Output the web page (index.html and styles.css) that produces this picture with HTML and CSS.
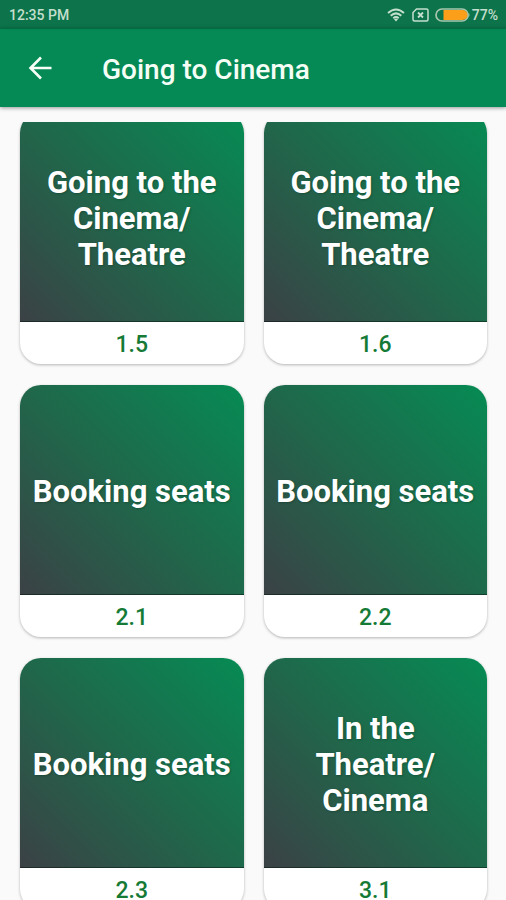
FILE: index.html
```html
<!DOCTYPE html>
<html lang="en">
<head>
<meta charset="utf-8">
<meta name="viewport" content="width=device-width, initial-scale=1">
<title>Going to Cinema</title>
<link rel="stylesheet" href="styles.css">
</head>
<body>
<div class="status">
  <span class="clock">12:35 PM</span>
  <svg class="wifi" width="18" height="14" viewBox="0 0 18 14" fill="none" stroke="currentColor" stroke-width="2" aria-hidden="true">
    <path d="M1 5Q9-2 17 5M3.700 7.700Q9 3 14.300 7.700M6.300 10.200Q9 7.800 11.700 10.200"/>
    <path d="M9 13.500L7 11.300Q9 9.800 11 11.300Z" fill="currentColor" stroke="none"/>
  </svg>
  <svg class="sim" width="17" height="14" viewBox="0 0 17 14" fill="none" stroke="currentColor" stroke-width="1.500" aria-hidden="true">
    <path d="M4.500 1H14.500Q16 1 16 2.500V11.500Q16 13 14.500 13H2.500Q1 13 1 11.500V4.500Z"/>
    <path d="M6 4.500L11 9.500M11 4.500L6 9.500" stroke-width="1.800"/>
  </svg>
  <svg class="battery" width="35" height="14" viewBox="0 0 35 14" aria-hidden="true">
    <rect x="1" y="1" width="32" height="12" rx="6" fill="none" stroke="#a9c7ae" stroke-width="1.700"/>
    <path d="M33.500 4.500Q35.500 7 33.500 9.500Z" fill="#a9c7ae"/>
    <path d="M8.500 2H27.500A5 5 0 0 1 27.500 12H8.500Z" fill="#fb9f1b"/>
  </svg>
  <span>77%</span>
</div>
<header class="appbar">
  <button class="back" type="button" aria-label="Back">
    <svg width="24" height="24" viewBox="0 0 24 24" fill="none" stroke="currentColor" stroke-width="2.600" aria-hidden="true">
      <path d="M23.500 12H2.500M13 1.500L2.500 12L13 22.500"/>
    </svg>
  </button>
  <h1 class="title">Going to Cinema</h1>
</header>
<main class="viewport">
  <div class="grid">
    <a class="card" href="#1.5"><span class="tile">Going to the Cinema/ Theatre</span><span class="number">1.5</span></a>
    <a class="card" href="#1.6"><span class="tile">Going to the Cinema/ Theatre</span><span class="number">1.6</span></a>
    <a class="card" href="#2.1"><span class="tile">Booking seats</span><span class="number">2.1</span></a>
    <a class="card" href="#2.2"><span class="tile">Booking seats</span><span class="number">2.2</span></a>
    <a class="card" href="#2.3"><span class="tile">Booking seats</span><span class="number">2.3</span></a>
    <a class="card" href="#3.1"><span class="tile">In the Theatre/ Cinema</span><span class="number">3.1</span></a>
  </div>
</main>
</body>
</html>
```
FILE: styles.css
```css
* {
  box-sizing: border-box;
}

body {
  margin: 0;
  height: 100vh;
  display: flex;
  flex-direction: column;
  overflow: hidden;
  background: #fafafa;
  font-family: Roboto, "Liberation Sans", sans-serif;
}

.status {
  flex: none;
  display: flex;
  align-items: center;
  height: 28px;
  padding: 2px 8px 0 9px;
  background: #0c734a;
  color: #c4dfcd;
  font-size: 14px;
  font-weight: 500;
}

.clock {
  flex: 1;
}

.sim {
  margin: 0 6px 0 7px;
}

.battery {
  margin-right: 2px;
}

.appbar {
  flex: none;
  display: flex;
  align-items: center;
  height: 79px;
  padding: 0 16px;
  background: #058a56;
  color: #f5fff5;
  box-shadow: 0 1px 4px rgba(0, 0, 0, 0.4), inset 0 2px 1px -1px rgba(0, 60, 30, 0.4);
}

.back {
  display: flex;
  align-items: center;
  justify-content: center;
  width: 48px;
  height: 48px;
  margin-right: 38px;
  padding: 0;
  border: 0;
  background: none;
  color: inherit;
}

.title {
  margin: 0;
  padding-top: 4px;
  font-size: 28px;
  line-height: 36px;
  font-weight: 500;
}

.viewport {
  flex: 1;
  min-height: 0;
  margin-top: 15px;
  overflow: hidden;
}

/* The list is scrolled slightly past the top of its first row. */
.grid {
  display: grid;
  grid-template-columns: 1fr 1fr;
  gap: 21px 20px;
  margin-top: -10px;
  padding: 0 19px 20px 20px;
}

.card {
  overflow: hidden;
  border-radius: 21px;
  background: #fff;
  box-shadow: 0 1px 3px rgba(0, 0, 0, 0.28);
  text-align: center;
  text-decoration: none;
}

.tile {
  display: flex;
  align-items: center;
  justify-content: center;
  height: 210px;
  padding: 4px 12px 0;
  background: linear-gradient(45deg, #3b4145 0%, #1f684b 50%, #068b54 100%);
  box-shadow: inset 0 -1px 0 rgba(0, 20, 10, 0.5);
  color: #fff;
  font-size: 31px;
  line-height: 36px;
  font-weight: 700;
  text-shadow: 1px 1px 2px rgba(0, 40, 20, 0.3);
}

.number {
  display: block;
  height: 42px;
  color: #157a35;
  font-size: 23px;
  line-height: 46px;
  font-weight: 500;
}
```
